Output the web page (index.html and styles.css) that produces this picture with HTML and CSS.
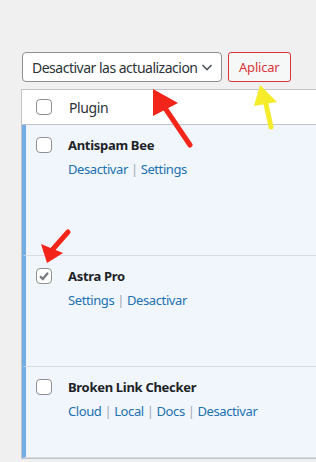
FILE: index.html
```html
<!DOCTYPE html>
<html lang="es">
  <head>
    <meta charset="UTF-8" />
    <meta name="viewport" content="width=device-width, initial-scale=1.0" />
    <title>Plugins</title>
    <link rel="stylesheet" href="styles.css">
  </head>
  <body>
    <div class="wrap">
      <div class="tablenav">
        <div class="bulk-select">
          <span class="bulk-label">Desactivar las actualizacion</span>
          <svg class="chevron" width="14" height="14" viewBox="0 0 14 14">
            <path d="M2.5 5 L7 9.5 L11.5 5" fill="none" stroke="#50575e" stroke-width="1.6" />
          </svg>
        </div>
        <button class="apply">Aplicar</button>
      </div>

      <div class="plugins">
        <div class="head-row">
          <span class="check"></span>
          <span class="col-name">Plugin</span>
        </div>

        <div class="plugin-row row-1">
          <span class="check"></span>
          <div class="plugin-info">
            <strong class="plugin-title">Antispam Bee</strong>
            <div class="row-actions">
              <a href="#">Desactivar</a> <span class="sep">|</span> <a href="#">Settings</a>
            </div>
          </div>
        </div>

        <div class="plugin-row row-2">
          <span class="check checked">
            <svg width="14" height="14" viewBox="0 0 14 14">
              <path d="M3 7.2 L5.8 10 L11 3.8" fill="none" stroke="#787c82" stroke-width="2.2" />
            </svg>
          </span>
          <div class="plugin-info">
            <strong class="plugin-title">Astra Pro</strong>
            <div class="row-actions">
              <a href="#">Settings</a> <span class="sep">|</span> <a href="#">Desactivar</a>
            </div>
          </div>
        </div>

        <div class="plugin-row row-3">
          <span class="check"></span>
          <div class="plugin-info">
            <strong class="plugin-title">Broken Link Checker</strong>
            <div class="row-actions">
              <a href="#">Cloud</a> <span class="sep">|</span> <a href="#">Local</a>
              <span class="sep">|</span> <a href="#">Docs</a> <span class="sep">|</span>
              <a href="#">Desactivar</a>
            </div>
          </div>
        </div>
      </div>
    </div>

    <svg class="annotations" width="316" height="462" viewBox="0 0 316 462">
      <g stroke-linecap="round">
        <line x1="165" y1="108" x2="190" y2="145" stroke="#f3251b" stroke-width="5" />
        <polygon points="153,89 153,116 178,103" fill="#f3251b" />
        <line x1="266" y1="104" x2="271" y2="127" stroke="#f5ec2a" stroke-width="5" />
        <polygon points="260,85 254,106 277,102" fill="#f5ec2a" />
        <line x1="53" y1="249" x2="68" y2="232" stroke="#f3251b" stroke-width="5" />
        <polygon points="47,263 41,244 63,253" fill="#f3251b" />
      </g>
    </svg>
  </body>
</html>
```

FILE: styles.css
```css
html,
body {
  margin: 0;
  overflow: hidden;
}

body {
  font-family: "Noto Sans", "Open Sans", sans-serif;
  background-color: #f0f0f1;
  color: #1d2327;
  font-size: 13px;
  letter-spacing: -0.4px;
  width: 316px;
  height: 462px;
  position: relative;
}

.wrap {
  padding: 52px 0 0 21px;
}

.tablenav {
  display: flex;
  gap: 6px;
  margin-left: 1px;
  height: 30px;
}

.bulk-select {
  box-sizing: border-box;
  width: 200px;
  height: 30px;
  display: flex;
  align-items: center;
  justify-content: space-between;
  padding: 0 7px 0 9px;
  background-color: white;
  border: 1px solid #8c8f94;
  border-radius: 4px;
  font-size: 14px;
  letter-spacing: -0.5px;
  color: #2c3338;
  white-space: nowrap;
}

.bulk-select .chevron {
  flex-shrink: 0;
}

.apply {
  box-sizing: border-box;
  height: 30px;
  padding: 0 10px;
  font-family: inherit;
  font-size: 13px;
  letter-spacing: -0.2px;
  color: #d63638;
  background-color: #f6f7f7;
  border: 1px solid #d63638;
  border-radius: 3px;
}

.plugins {
  margin-top: 7px;
  width: 300px;
  border: 1px solid #c3c4c7;
  border-right: none;
  background-color: white;
}

.head-row {
  display: flex;
  align-items: center;
  height: 34px;
  padding-left: 14px;
  border-bottom: 1px solid #c3c4c7;
}

.col-name {
  margin-left: 17px;
  font-size: 14px;
  color: #2c3338;
}

.check {
  box-sizing: border-box;
  width: 16px;
  height: 16px;
  flex-shrink: 0;
  display: flex;
  align-items: center;
  justify-content: center;
  background-color: white;
  border: 1px solid #8c8f94;
  border-radius: 4px;
}

.plugin-row {
  display: flex;
  align-items: flex-start;
  padding: 12px 0 0 10px;
  background-color: #f0f6fc;
  border-left: 4px solid #72aee6;
  border-top: 1px solid #dcdcde;
}

.head-row + .plugin-row {
  border-top: none;
}

.row-1 {
  height: 118px;
}

.row-2 {
  height: 98px;
}

.row-3 {
  height: 78px;
  border-bottom: 1px solid #dcdcde;
}

.plugin-info {
  margin-left: 16px;
  margin-top: -2px;
}

.plugin-title {
  display: block;
  font-size: 13px;
  font-weight: 700;
  letter-spacing: -0.3px;
  line-height: 20px;
  color: #1d2327;
}

.row-actions {
  margin-top: 5px;
  font-size: 13px;
  line-height: 18px;
  color: #a7aaad;
}

.row-actions a {
  color: #2271b1;
  text-decoration: none;
}

.annotations {
  position: absolute;
  top: 0;
  left: 0;
  pointer-events: none;
}
```
